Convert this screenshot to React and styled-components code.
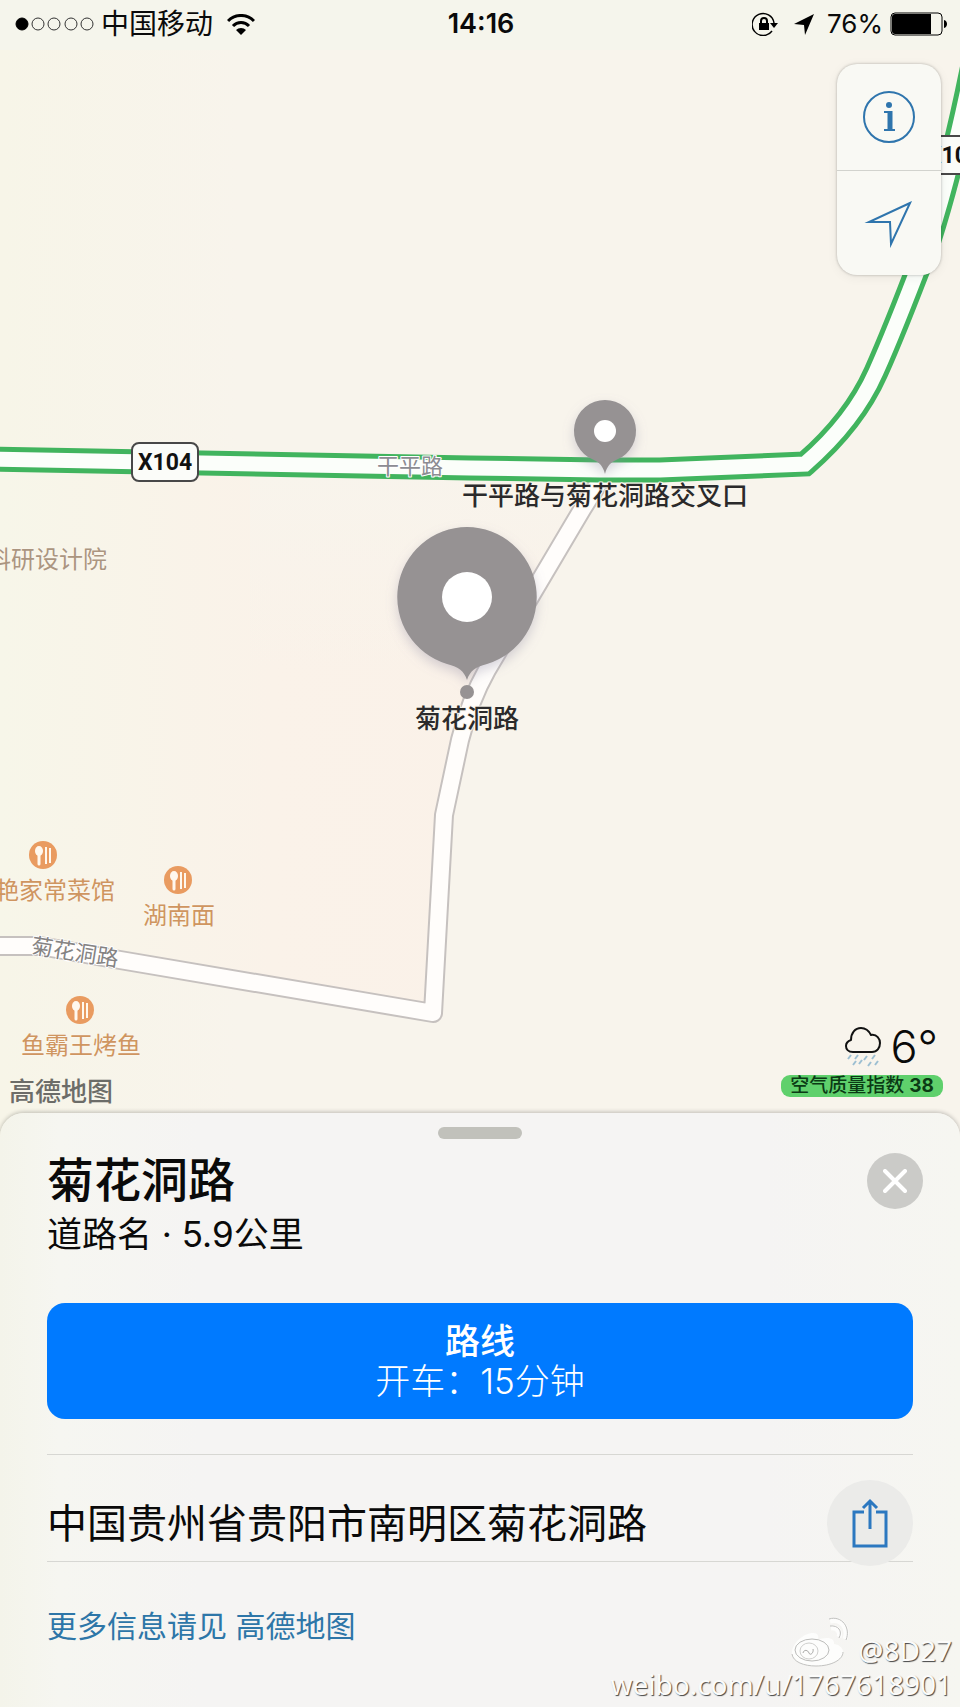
import React from "react";
import styled, { createGlobalStyle } from "styled-components";

const GlobalStyle = createGlobalStyle`
  * {
    box-sizing: border-box;
  }
  body {
    margin: 0;
    background: #f5f4f2;
    color: #0a0a0a;
    font-family: Inter, "Noto Sans CJK SC", sans-serif;
  }
  button {
    padding: 0;
    border: 0;
    background: none;
    font: inherit;
    color: inherit;
    cursor: pointer;
  }
`;

const Screen = styled.div`
  display: flex;
  flex-direction: column;
  min-height: 100vh;
  overflow: hidden;
`;

/* ---------- map ---------- */

const MapArea = styled.main`
  position: relative;
  display: flex;
  flex-direction: column;
  flex: 1;
  min-height: 720px;
`;

const MapDrawing = styled.svg`
  position: absolute;
  inset: 0;
  width: 100%;
  height: 100%;
`;

const MapText = styled.text`
  font-family: Inter, "Noto Sans CJK SC", sans-serif;
  font-size: ${(p) => p.$size || 24}px;
  font-weight: ${(p) => p.$weight || 400};
  fill: ${(p) => p.$color};
  stroke: ${(p) => p.$halo || "#faf6ec"};
  stroke-width: 2px;
  stroke-linejoin: round;
  paint-order: stroke;
  text-anchor: ${(p) => p.$anchor || "middle"};
`;

const BadgeText = styled.text`
  font-family: Roboto, "Liberation Sans", sans-serif;
  font-size: 23px;
  font-weight: 700;
  fill: #111;
  text-anchor: middle;
`;

const MapTop = styled.div`
  position: relative;
  display: flex;
  flex-direction: column;
`;

const StatusBar = styled.header`
  display: grid;
  grid-template-columns: 1fr auto 1fr;
  align-items: center;
  height: 48px;
  padding: 0 13px 0 15px;
  font-size: 26px;
  line-height: 32px;
`;

const StatusGroup = styled.div`
  display: flex;
  align-items: center;
  justify-content: ${(p) => (p.$end ? "flex-end" : "flex-start")};
  gap: ${(p) => p.$gap}px;
`;

const Carrier = styled.span`
  margin-right: 8px;
  font-size: 28px;
`;

const StatusIcons = styled.span`
  display: flex;
  align-items: center;
  gap: 16px;
  margin-right: 6px;
`;

const Clock = styled.time`
  font-size: 27px;
  font-weight: 600;
`;

const Battery = styled.span`
  font-size: 26px;
`;

const Controls = styled.div`
  display: flex;
  flex-direction: column;
  align-self: flex-end;
  width: 104px;
  margin: 16px 19px 0 0;
  border-radius: 20px;
  background: #f9f9f4;
  box-shadow: 0 0 3px rgba(0, 0, 0, 0.28), 0 2px 12px rgba(0, 0, 0, 0.06);
`;

const ControlButton = styled.button`
  display: flex;
  align-items: center;
  justify-content: center;
  height: 106px;
  color: #2f75ad;

  & + & {
    height: 105px;
    border-top: 1px solid #d2d3ce;
  }
`;

const MapBottom = styled.div`
  position: relative;
  display: flex;
  align-items: flex-end;
  justify-content: space-between;
  margin-top: auto;
  padding: 0 17px 40px 9px;
`;

const MapBrand = styled.span`
  margin-bottom: -10px;
  font-size: 26px;
  font-weight: 500;
  line-height: 30px;
  color: #6c6c68;
`;

const Weather = styled.div`
  display: flex;
  flex-direction: column;
  align-items: flex-end;
`;

const Temperature = styled.div`
  display: flex;
  align-items: center;
  gap: 8px;
  padding-right: 5px;
  font-size: 45px;
  font-weight: 300;
  line-height: 56px;
`;

const AirQuality = styled.div`
  padding: 0 9px;
  border-radius: 9px;
  background: #5fd06c;
  font-size: 19px;
  font-weight: 500;
  line-height: 22px;
  color: #0b3a14;

  b {
    font-weight: 700;
  }
`;

/* ---------- place sheet ---------- */

const Sheet = styled.section`
  position: relative;
  margin-top: -24px;
  padding: 14px 47px 61px;
  border-radius: 24px 24px 0 0;
  background: linear-gradient(90deg, #f4f4ea 0, #f6f6f1 60px, #f5f4f3 200px, #f5f4f3 80%, #f6f6f1 100%);
  box-shadow: 0 -1px 4px rgba(0, 0, 0, 0.24);
`;

const Handle = styled.div`
  width: 84px;
  height: 12px;
  margin: 0 auto;
  border-radius: 6px;
  background: #c1c1bb;
`;

const PlaceHeader = styled.div`
  display: flex;
  align-items: flex-start;
  justify-content: space-between;
  margin-top: 14px;
`;

const PlaceName = styled.h1`
  margin: 0;
  font-size: 47px;
  font-weight: 500;
  line-height: 54px;
`;

const PlaceInfo = styled.p`
  margin: 6px 0 0;
  font-size: 35px;
  line-height: 42px;
`;

const CloseButton = styled.button`
  display: flex;
  align-items: center;
  justify-content: center;
  width: 56px;
  height: 56px;
  margin-right: -10px;
  border-radius: 50%;
  background: #cbcbc8;
  color: #fff;
`;

const RouteButton = styled.button`
  display: flex;
  flex-direction: column;
  align-items: center;
  width: 100%;
  margin-top: 48px;
  padding: 18px 0;
  border-radius: 18px;
  background: #007aff;
  color: #fff;
  font-size: 35px;
  font-weight: 300;
  line-height: 40px;

  strong {
    font-weight: 500;
  }
`;

const AddressRow = styled.div`
  display: flex;
  align-items: center;
  justify-content: space-between;
  margin-top: 35px;
  padding-top: 25px;
  border-top: 1px solid #d7d7d3;
  border-bottom: 1px solid #d7d7d3;
`;

const Address = styled.address`
  padding-top: 6px;
  font-size: 40px;
  font-style: normal;
  line-height: 56px;
`;

const ShareButton = styled.button`
  display: flex;
  align-items: center;
  justify-content: center;
  flex: none;
  width: 86px;
  height: 86px;
  margin-bottom: -5px;
  border-radius: 50%;
  background: #ebebe9;
  color: #2c78c0;
`;

const MoreLink = styled.a`
  display: inline-block;
  margin-top: 44px;
  font-size: 30px;
  line-height: 40px;
  color: #2d76a8;
  text-decoration: none;
`;

const Watermark = styled.div`
  position: absolute;
  right: 8px;
  bottom: 6px;
  display: flex;
  flex-direction: column;
  align-items: flex-end;
  font-family: "Noto Sans", sans-serif;
  font-size: 28px;
  line-height: 34px;
  color: #fbfbfa;
  text-shadow: 1px 1px 1px #444;
`;

const WatermarkUser = styled.div`
  display: flex;
  align-items: flex-end;
  gap: 8px;
`;

/* ---------- drawings ---------- */

const MAIN_ROAD =
  "M-10 459 L470 468 L600 470 L660 470 L805 464 C835 438 860 408 876 372 C894 332 912 285 929 240 C945 190 960 130 974 60";
const SIDE_ROAD =
  "M-10 946 L40 946 L120 960 L433 1013 L444 815 L460 740 Q470 700 487 670 L583 508 L603 476";

const RoadBadge = ({ x, y }) => (
  <g>
    <rect x={x + 1} y={y + 1} width="66" height="38" rx="7" fill="#fbfcf9" stroke="#484848" strokeWidth="2" />
    <BadgeText x={x + 34} y={y + 28}>
      X104
    </BadgeText>
  </g>
);

const Restaurant = ({ x, y, labelX, name }) => (
  <g>
    <circle cx={x} cy={y} r="14" fill="#e99b60" />
    <ellipse cx={x - 4} cy={y - 4} rx="4" ry="5" fill="#fff8ee" />
    <path d={`M${x - 4} ${y}v9`} stroke="#fff8ee" strokeWidth="3" strokeLinecap="round" />
    <path d={`M${x + 3} ${y - 8}v17M${x + 7} ${y - 7}v15`} stroke="#fff8ee" strokeWidth="2" />
    <MapText x={labelX} y={y + 44} $color="#cf9560">
      {name}
    </MapText>
  </g>
);

const Cloud = () => (
  <svg width="38" height="42" viewBox="0 0 38 42" fill="none">
    <path
      d="M9 26C4 26 2 23 2 20c0-3 2-5 5-6 0-7 4-12 10-12 5 0 8 3 10 7 6-1 9 4 9 8 0 5-3 9-8 9z"
      stroke="#111"
      strokeWidth="2"
      strokeLinejoin="round"
    />
    <path
      d="M7 29l-3 4M14 29l-3 4M23 30l-3 4M31 29l-3 4M12 35l-3 4M18 34l-3 4M27 36l-3 4M34 35l-3 4"
      stroke="#9dbfd2"
      strokeWidth="2"
    />
  </svg>
);

const MapCanvas = () => (
  <MapDrawing viewBox="0 0 960 1137" preserveAspectRatio="xMidYMax slice" aria-label="地图">
    <defs>
      <linearGradient id="edge">
        <stop offset="0" stopColor="#f7f5e8" />
        <stop offset="0.25" stopColor="#f8f4ec" />
        <stop offset="1" stopColor="#f8f4ec" />
      </linearGradient>
      <linearGradient id="block">
        <stop offset="0" stopColor="#f7f6e9" />
        <stop offset="0.45" stopColor="#faf2e9" />
        <stop offset="1" stopColor="#faf1e8" />
      </linearGradient>
      <linearGradient id="fade" x1="0" y1="0" x2="0" y2="1">
        <stop offset="0" stopColor="#f8f4ec" />
        <stop offset="1" stopColor="#f8f4ec" stopOpacity="0" />
      </linearGradient>
      <filter id="shadow" x="-30%" y="-30%" width="160%" height="170%">
        <feDropShadow dx="0" dy="5" stdDeviation="6" floodColor="#8a86a0" floodOpacity="0.35" />
      </filter>
    </defs>
    <rect y="-900" width="960" height="2100" fill="url(#edge)" />
    <path d="M0 470H603L487 670L460 740L444 815L433 1013L120 960L0 946Z" fill="url(#block)" />
    <rect x="250" y="470" width="360" height="200" fill="url(#fade)" />
    <rect width="960" height="50" fill="#f5f5ec" />

    <g fill="none" strokeLinejoin="round">
      <path d={SIDE_ROAD} stroke="#c6c1bf" strokeWidth="20" />
      <path d={SIDE_ROAD} stroke="#fffdfb" strokeWidth="16" />
    </g>
    <g fill="none" strokeLinejoin="miter">
      <path d={MAIN_ROAD} stroke="#41b45e" strokeWidth="25" />
      <path d={MAIN_ROAD} stroke="#fbfefa" strokeWidth="15" />
    </g>

    <RoadBadge x={131} y={442} />
    <RoadBadge x={920} y={135} />

    <MapText x="410" y="474" $size={22} $color="#8c8c92" $halo="#fff">
      干平路
    </MapText>
    <MapText x="75" y="960" $size={22} $color="#858383" $halo="#fff" transform="rotate(9 75 952)">
      菊花洞路
    </MapText>
    <MapText x="107" y="568" $color="#ab9580" $anchor="end">
      科研设计院
    </MapText>
    <Restaurant x={43} y={855} labelX={55} name="艳家常菜馆" />
    <Restaurant x={178} y={880} labelX={179} name="湖南面" />
    <Restaurant x={80} y={1010} labelX={81} name="鱼霸王烤鱼" />

    <g filter="url(#shadow)">
      <path
        d="M605 400a31 31 0 0 1 12 59.600c-7 3-10 7-12 14.400c-2-7.400-5-11.400-12-14.400A31 31 0 0 1 605 400z"
        fill="#969293"
      />
    </g>
    <circle cx="605" cy="431" r="11" fill="#fff" />
    <MapText x="605" y="505" $size={26} $weight={500} $color="#2b2a2b">
      干平路与菊花洞路交叉口
    </MapText>

    <g filter="url(#shadow)">
      <path
        d="M467 527a70 70 0 0 1 20 137c-12 3-17 7-20 16c-3-9-8-13-20-16A70 70 0 0 1 467 527z"
        fill="#969293"
      />
    </g>
    <circle cx="467" cy="597" r="25" fill="#fff" />
    <circle cx="467" cy="692" r="7" fill="#969293" />
    <MapText x="467" y="728" $size={26} $weight={500} $color="#2b2a2b">
      菊花洞路
    </MapText>
  </MapDrawing>
);

const SignalDots = () => (
  <svg width="80" height="14" viewBox="0 0 80 14" fill="none" stroke="#333">
    <circle cx="7" cy="7" r="6" fill="#000" stroke="#000" />
    {[23, 39, 56, 72].map((cx) => (
      <circle key={cx} cx={cx} cy="7" r="6" />
    ))}
  </svg>
);

const Wifi = () => (
  <svg width="28" height="21" viewBox="0 0 28 21" fill="none" stroke="#000" strokeWidth="3">
    <path d="M1 7a18 18 0 0 1 26 0" />
    <path d="M6 12a11 11 0 0 1 16 0" />
    <path d="M9 16a7 7 0 0 1 10 0l-5 5z" fill="#000" stroke="none" />
  </svg>
);

const RotationLock = () => (
  <svg width="26" height="24" viewBox="0 0 26 24" fill="none" stroke="#000">
    <path d="M20 19a11 11 0 1 1 2-8" strokeWidth="1.500" />
    <path d="M18 11h8l-4 5z" fill="#000" stroke="none" />
    <path d="M9 11V9a3 3 0 0 1 6 0v2" strokeWidth="2" />
    <rect x="7" y="11" width="10" height="7" fill="#000" stroke="none" />
  </svg>
);

const LocationArrow = () => (
  <svg width="20" height="21" viewBox="0 0 20 21">
    <path d="M20 0L0 10l10 1 1 10z" fill="#000" />
  </svg>
);

const BatteryIcon = () => (
  <svg width="57" height="24" viewBox="0 0 57 24" fill="none">
    <rect x="1" y="1" width="51" height="22" rx="4" stroke="#000" />
    <path d="M5 2h36v20H5a3 3 0 0 1-3-3V5a3 3 0 0 1 3-3z" fill="#000" />
    <path d="M54 8c4 1 4 7 0 8z" fill="#000" />
  </svg>
);

const WeiboLogo = () => (
  <svg width="60" height="50" viewBox="0 0 60 50" fill="none">
    <path
      d="M2 36C2 26 14 16 23 16c5 0 6 3 5 7 6-3 17-3 16 4 6 1 9 4 9 8 0 8-13 14-27 14S2 44 2 36z"
      fill="#fdfdfc"
    />
    <path d="M2 37c1 8 12 12 24 12 15 0 27-6 27-14" stroke="#c2c2c0" />
    <ellipse cx="22" cy="33" rx="17" ry="11" stroke="#bcbcba" />
    <ellipse cx="19" cy="34" rx="9" ry="8" stroke="#cfcfcd" />
    <path d="M13 36c1-4 5-3 6 0s5 0 4-4" stroke="#a9a9a7" />
    <path d="M40 4c11-3 19 7 15 18M41 11c6-1 10 4 8 9" stroke="#fdfdfc" strokeWidth="5" />
    <path d="M39 2c13-4 22 9 17 21M40 9c8-1 13 5 9 12" stroke="#c0c0be" />
  </svg>
);

export default function App() {
  return (
    <Screen>
      <GlobalStyle />
      <MapArea>
        <MapCanvas />
        <MapTop>
          <StatusBar>
            <StatusGroup $gap={6}>
              <SignalDots />
              <Carrier>中国移动</Carrier>
              <Wifi />
            </StatusGroup>
            <Clock>14:16</Clock>
            <StatusGroup $end $gap={7}>
              <StatusIcons>
                <RotationLock />
                <LocationArrow />
              </StatusIcons>
              <Battery>76%</Battery>
              <BatteryIcon />
            </StatusGroup>
          </StatusBar>
          <Controls>
            <ControlButton aria-label="信息">
              <svg width="52" height="52" viewBox="0 0 52 52" fill="none" stroke="currentColor">
                <circle cx="26" cy="26" r="25" strokeWidth="2" />
                <circle cx="26" cy="14" r="3" fill="currentColor" stroke="none" />
                <path d="M27 20v19" strokeWidth="5" />
                <path d="M21 21h6M21 39h11" strokeWidth="2" />
              </svg>
            </ControlButton>
            <ControlButton aria-label="定位">
              <svg width="50" height="50" viewBox="0 0 50 50" fill="none" stroke="currentColor" strokeWidth="2">
                <path d="M46 5L5 24h21l1 22z" strokeMiterlimit="10" />
              </svg>
            </ControlButton>
          </Controls>
        </MapTop>
        <MapBottom>
          <MapBrand>高德地图</MapBrand>
          <Weather>
            <Temperature>
              <Cloud />
              <span>6°</span>
            </Temperature>
            <AirQuality>
              空气质量指数 <b>38</b>
            </AirQuality>
          </Weather>
        </MapBottom>
      </MapArea>

      <Sheet>
        <Handle />
        <PlaceHeader>
          <div>
            <PlaceName>菊花洞路</PlaceName>
            <PlaceInfo>道路名 · 5.9公里</PlaceInfo>
          </div>
          <CloseButton aria-label="关闭">
            <svg width="24" height="24" viewBox="0 0 24 24" stroke="currentColor" strokeWidth="4" strokeLinecap="round">
              <path d="M2 2l20 20M22 2L2 22" />
            </svg>
          </CloseButton>
        </PlaceHeader>
        <RouteButton>
          <strong>路线</strong>
          <span>开车：15分钟</span>
        </RouteButton>
        <AddressRow>
          <Address>中国贵州省贵阳市南明区菊花洞路</Address>
          <ShareButton aria-label="分享">
            <svg width="36" height="50" viewBox="0 0 36 50" fill="none" stroke="currentColor" strokeWidth="3">
              <path d="M12 14H2v34h32V14H24" />
              <path d="M18 31V3M11 10l7-7 7 7" />
            </svg>
          </ShareButton>
        </AddressRow>
        <MoreLink href="#amap">更多信息请见 高德地图</MoreLink>
        <Watermark>
          <WatermarkUser>
            <WeiboLogo />
            @8D27
          </WatermarkUser>
          <span>weibo.com/u/1767618901</span>
        </Watermark>
      </Sheet>
    </Screen>
  );
}
